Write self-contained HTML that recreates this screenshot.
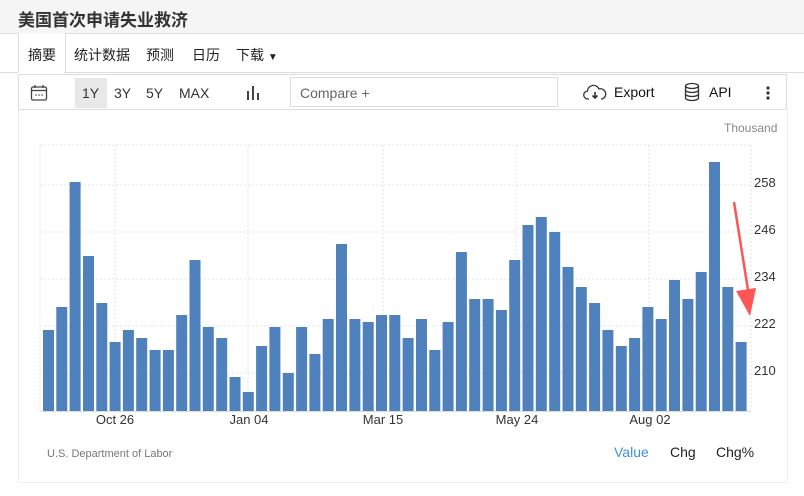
<!DOCTYPE html>
<html><head><meta charset="utf-8"><style>
body{margin:0;width:804px;height:496px;background:#fff;font-family:"Liberation Sans","Noto Sans CJK SC",sans-serif;position:relative;overflow:hidden}
.hdr{position:absolute;left:0;top:0;width:804px;height:33px;background:#f5f5f5;border-bottom:1px solid #ddd}
.hdr span{position:absolute;left:18px;top:6px;font-size:17px;font-weight:bold;color:#333}
.tab{position:absolute;top:45px;font-size:14px;color:#222}
.a{position:absolute}
</style></head><body>
<div class="hdr"><span>美国首次申请失业救济</span></div>
<div class="a" style="left:18px;top:33px;width:46px;height:39px;border-left:1px solid #ddd;border-right:1px solid #ddd;background:#fff"></div>
<div class="a" style="left:64px;top:72px;width:740px;height:1px;background:#ddd"></div>
<div class="a" style="left:0;top:72px;width:18px;height:1px;background:#ddd"></div>
<div class="tab" style="left:28px">摘要</div>
<div class="tab" style="left:74px">统计数据</div>
<div class="tab" style="left:146px">预测</div>
<div class="tab" style="left:192px">日历</div>
<div class="tab" style="left:236px">下载 <span style="font-size:10px">▼</span></div>
<div class="a" style="left:18px;top:74px;width:769px;height:36px;border:1px solid #ddd;box-sizing:border-box"></div>
<div class="a" style="left:18px;top:110px;width:770px;height:373px;border:1px solid #eee;border-top:none;box-sizing:border-box"></div>
<svg class="a" style="left:30px;top:84px" width="18" height="18" viewBox="0 0 18 18"><rect x="1.5" y="3" width="15" height="13" rx="1.5" fill="none" stroke="#444" stroke-width="1.3"/><line x1="1.5" y1="6.5" x2="16.5" y2="6.5" stroke="#444" stroke-width="1.3"/><line x1="5" y1="1" x2="5" y2="4" stroke="#444" stroke-width="1.3"/><line x1="13" y1="1" x2="13" y2="4" stroke="#444" stroke-width="1.3"/><circle cx="6" cy="11" r=".8" fill="#444"/><circle cx="9" cy="11" r=".8" fill="#444"/><circle cx="12" cy="11" r=".8" fill="#444"/></svg>
<div class="a" style="left:75px;top:78px;width:32px;height:30px;background:#e8e8e8"></div>
<div class="a" style="left:82px;top:85px;font-size:14px;color:#333">1Y</div>
<div class="a" style="left:114px;top:85px;font-size:14px;color:#333">3Y</div>
<div class="a" style="left:146px;top:85px;font-size:14px;color:#333">5Y</div>
<div class="a" style="left:179px;top:85px;font-size:14px;color:#333">MAX</div>
<svg class="a" style="left:246px;top:85px" width="14" height="16"><rect x="1" y="6" width="2" height="9" fill="#444"/><rect x="6" y="1" width="2" height="14" fill="#444"/><rect x="11" y="8" width="2" height="7" fill="#444"/></svg>
<div class="a" style="left:290px;top:77px;width:268px;height:30px;border:1px solid #ddd;box-sizing:border-box"></div>
<div class="a" style="left:300px;top:85px;font-size:14px;color:#666">Compare +</div>
<svg class="a" style="left:583px;top:84px" width="24" height="18" viewBox="0 0 24 18"><path d="M6 15H5a4 4 0 0 1-.5-8A6 6 0 0 1 16 5a4.5 4.5 0 0 1 3 10h-1" fill="none" stroke="#333" stroke-width="1.3"/><path d="M12 8v6M9.5 11.5 12 14l2.5-2.5" fill="none" stroke="#333" stroke-width="1.6"/></svg>
<div class="a" style="left:614px;top:84px;font-size:14px;color:#111">Export</div>
<svg class="a" style="left:684px;top:82px" width="16" height="20" viewBox="0 0 16 20"><ellipse cx="8" cy="4" rx="6.5" ry="2.5" fill="none" stroke="#333" stroke-width="1.3"/><path d="M1.5 4v12c0 1.4 2.9 2.5 6.5 2.5s6.5-1.1 6.5-2.5V4M1.5 8c0 1.4 2.9 2.5 6.5 2.5s6.5-1.1 6.5-2.5M1.5 12c0 1.4 2.9 2.5 6.5 2.5s6.5-1.1 6.5-2.5" fill="none" stroke="#333" stroke-width="1.3"/></svg>
<div class="a" style="left:709px;top:84px;font-size:14px;color:#111">API</div>
<svg class="a" style="left:766px;top:85px" width="4" height="16"><circle cx="2" cy="3" r="1.6" fill="#333"/><circle cx="2" cy="8" r="1.6" fill="#333"/><circle cx="2" cy="13" r="1.6" fill="#333"/></svg>
<div class="a" style="left:724px;top:121px;font-size:12px;color:#888">Thousand</div>
<svg class="a" style="left:0;top:0" width="804" height="496">
<g stroke="#e6e6e6" stroke-dasharray="2,2" stroke-width="1">
<line x1="40" y1="145" x2="751" y2="145"/><line x1="40" y1="185" x2="751" y2="185"/><line x1="40" y1="232" x2="751" y2="232"/><line x1="40" y1="279" x2="751" y2="279"/><line x1="40" y1="326" x2="751" y2="326"/><line x1="40" y1="373" x2="751" y2="373"/>
<line x1="40" y1="145" x2="40" y2="411"/><line x1="115" y1="145" x2="115" y2="411"/><line x1="248" y1="145" x2="248" y2="411"/><line x1="383" y1="145" x2="383" y2="411"/><line x1="516" y1="145" x2="516" y2="411"/><line x1="649" y1="145" x2="649" y2="411"/><line x1="751" y1="145" x2="751" y2="411"/>
</g>
<line x1="40" y1="411.5" x2="751" y2="411.5" stroke="#ddd"/>
<g fill="#4f81bd" id="bars"></g>
<g font-size="13" fill="#333" font-family="Liberation Sans,sans-serif">
<text x="754" y="187">258</text><text x="754" y="234">246</text><text x="754" y="281">234</text><text x="754" y="328">222</text><text x="754" y="375">210</text>
<text x="115" y="424" text-anchor="middle">Oct 26</text><text x="249" y="424" text-anchor="middle">Jan 04</text><text x="383" y="424" text-anchor="middle">Mar 15</text><text x="517" y="424" text-anchor="middle">May 24</text><text x="650" y="424" text-anchor="middle">Aug 02</text>
</g>
<path d="M734 202 L748 290" stroke="#f55" stroke-width="2.5"/>
<path d="M736 291 L756 288 L750 316 Z" fill="#f55"/>
<text x="47" y="457" font-size="11" fill="#777" font-family="Liberation Sans,sans-serif">U.S. Department of Labor</text>
<text x="614" y="457" font-size="14" fill="#3d8fe0" font-family="Liberation Sans,sans-serif">Value</text>
<text x="670" y="457" font-size="14" fill="#222" font-family="Liberation Sans,sans-serif">Chg</text>
<text x="716" y="457" font-size="14" fill="#222" font-family="Liberation Sans,sans-serif">Chg%</text>
</svg>
<script>
var t=[330,307,182,256,303,342,330,338,350,350,315,260,327,338,377,392,346,327,373,327,354,319,244,319,322,315,315,338,319,350,322,252,299,299,310,260,225,217,232,267,287,303,330,346,338,307,319,280,299,272,162,287,342];
var g=document.getElementById('bars'),s='';
for(var i=0;i<t.length;i++){var x=43+13.32*i;s+='<rect x="'+x.toFixed(1)+'" y="'+t[i]+'" width="11" height="'+(411-t[i])+'"/>';}
g.innerHTML=s;
</script>
</body></html>
